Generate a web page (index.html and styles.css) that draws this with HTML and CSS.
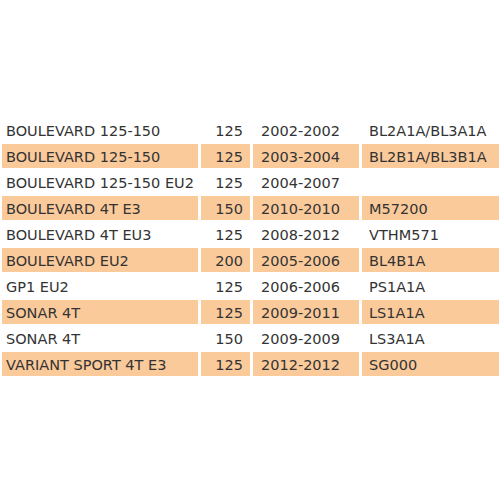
FILE: index.html
```html
<!DOCTYPE html>
<html>
<head>
<meta charset="utf-8">
<link rel="stylesheet" href="styles.css">
</head>
<body>
<div class="page">
<table class="models">
<colgroup><col class="c-name"><col class="c-cc"><col class="c-year"><col class="c-code"></colgroup>
<tbody>
<tr><td class="name">BOULEVARD 125-150</td><td class="cc">125</td><td class="year">2002-2002</td><td class="code">BL2A1A/BL3A1A</td></tr>
<tr class="alt"><td class="name">BOULEVARD 125-150</td><td class="cc">125</td><td class="year">2003-2004</td><td class="code">BL2B1A/BL3B1A</td></tr>
<tr><td class="name">BOULEVARD 125-150 EU2</td><td class="cc">125</td><td class="year">2004-2007</td><td class="code"></td></tr>
<tr class="alt"><td class="name">BOULEVARD 4T E3</td><td class="cc">150</td><td class="year">2010-2010</td><td class="code">M57200</td></tr>
<tr><td class="name">BOULEVARD 4T EU3</td><td class="cc">125</td><td class="year">2008-2012</td><td class="code">VTHM571</td></tr>
<tr class="alt"><td class="name">BOULEVARD EU2</td><td class="cc">200</td><td class="year">2005-2006</td><td class="code">BL4B1A</td></tr>
<tr><td class="name">GP1 EU2</td><td class="cc">125</td><td class="year">2006-2006</td><td class="code">PS1A1A</td></tr>
<tr class="alt"><td class="name">SONAR 4T</td><td class="cc">125</td><td class="year">2009-2011</td><td class="code">LS1A1A</td></tr>
<tr><td class="name">SONAR 4T</td><td class="cc">150</td><td class="year">2009-2009</td><td class="code">LS3A1A</td></tr>
<tr class="alt"><td class="name">VARIANT SPORT 4T E3</td><td class="cc">125</td><td class="year">2012-2012</td><td class="code">SG000</td></tr>
</tbody>
</table>
</div>
</body>
</html>
```

FILE: styles.css
```css
html, body {
  margin: 0;
  padding: 0;
  background: #ffffff;
  overflow: hidden;
}
.page {
  width: 500px;
  height: 500px;
  padding-top: 116px;
  box-sizing: border-box;
  overflow: hidden;
}
.models {
  table-layout: fixed;
  border-collapse: separate;
  border-spacing: 3px 2px;
  width: 503px;
  margin-left: -1px;
  font-family: "DejaVu Sans", Verdana, sans-serif;
  font-size: 14.5px;
  color: #333333;
}
.c-name { width: 196px; }
.c-cc { width: 49px; }
.c-year { width: 106px; }
.c-code { width: 137px; }
.models td {
  height: 24px;
  padding: 2px 0 0 0;
  box-sizing: border-box;
  vertical-align: middle;
  white-space: nowrap;
  overflow: hidden;
}
.models .name { padding-left: 4px; }
.models .cc { text-align: right; padding-right: 7px; }
.models .year { padding-left: 8px; }
.models .code { padding-left: 7px; }
.models tr.alt td {
  background: #fbca9b;
}
```
